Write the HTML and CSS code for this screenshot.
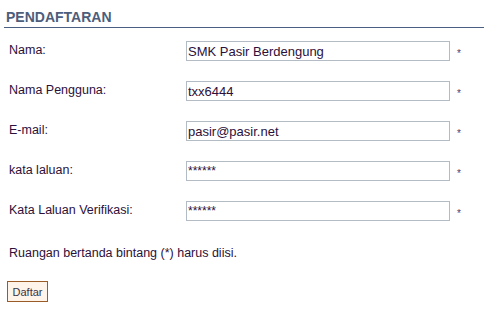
FILE: index.html
```html
<!DOCTYPE html>
<html lang="ms">
<head>
    <meta charset="UTF-8">
    <title>Pendaftaran</title>
    <link rel="stylesheet" href="styles.css">
</head>
<body>
    <div class="wrap">
        <h2 class="title">PENDAFTARAN</h2>
        <form class="reg_form">
            <div class="row">
                <label class="lbl">Nama:</label>
                <input class="field" type="text" value="SMK Pasir Berdengung">
                <span class="req">*</span>
            </div>
            <div class="row">
                <label class="lbl">Nama Pengguna:</label>
                <input class="field" type="text" value="txx6444">
                <span class="req">*</span>
            </div>
            <div class="row">
                <label class="lbl">E-mail:</label>
                <input class="field" type="text" value="pasir@pasir.net">
                <span class="req">*</span>
            </div>
            <div class="row">
                <label class="lbl">kata laluan:</label>
                <input class="field pw" type="text" value="******">
                <span class="req">*</span>
            </div>
            <div class="row">
                <label class="lbl">Kata Laluan Verifikasi:</label>
                <input class="field pw" type="text" value="******">
                <span class="req">*</span>
            </div>
            <p class="note">Ruangan bertanda bintang (*) harus diisi.</p>
            <button class="btn" type="button">Daftar</button>
        </form>
    </div>
</body>
</html>
```

FILE: styles.css
```css
body{
    margin: 0;
    background-color: #fff;
    font-family: "Liberation Sans", Arial, sans-serif;
}
.wrap{
    padding-left: 4px;
}
.title{
    margin: 9px 0 0 0;
    padding: 0 0 2px 2px;
    font-size: 14px;
    line-height: 16px;
    font-weight: bold;
    color: #4d5d7c;
    border-bottom: 1px solid #4a5e82;
}
.reg_form{
    padding-top: 13px;
    display: flex;
    flex-direction: column;
    gap: 20px;
}
.row{
    display: grid;
    grid-template-columns: 182px 264px 20px;
    align-items: start;
    height: 20px;
}
.lbl{
    padding: 1px 0 0 5px;
    font-size: 12.5px;
    line-height: 16px;
    color: #2c0f3a;
}
.field{
    box-sizing: border-box;
    width: 264px;
    height: 20px;
    margin: 0;
    padding: 0 1px;
    border: 1px solid #b3bcc5;
    font-family: "Liberation Sans", Arial, sans-serif;
    font-size: 13px;
    color: #2c0f3a;
    background-color: #fff;
    outline: none;
}
.field.pw{
    font-size: 12px;
}
.req{
    padding: 8px 0 0 7px;
    font-size: 10px;
    line-height: 10px;
    color: #5a3a66;
}
.note{
    margin: 4px 0 0 0;
    padding-left: 5px;
    font-size: 12.5px;
    line-height: 16px;
    color: #2c0f3a;
}
.btn{
    align-self: flex-start;
    margin: 0 0 0 3px;
    width: 41px;
    height: 21px;
    padding: 0;
    border: 1px solid #9b5b26;
    background-color: #fff4ea;
    font-family: "Liberation Sans", Arial, sans-serif;
    font-size: 11px;
    color: #3a3346;
}
```
